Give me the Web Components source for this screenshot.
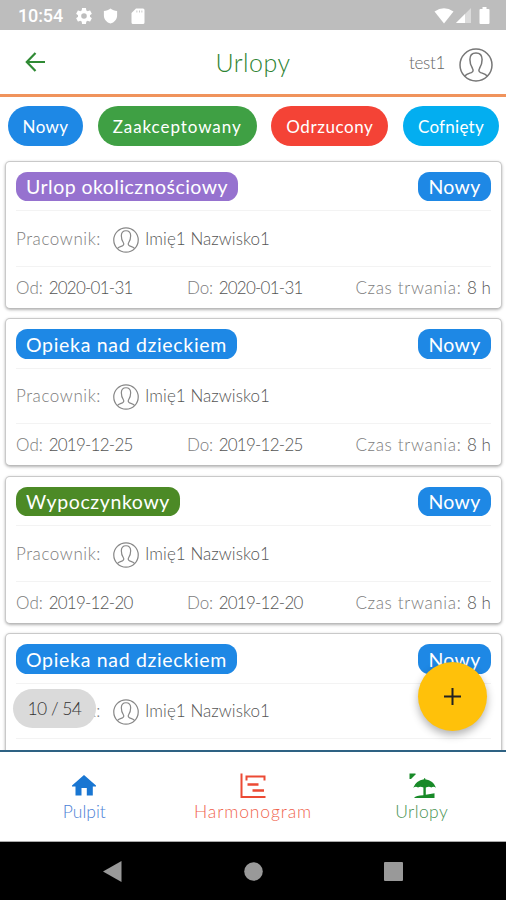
<!DOCTYPE html>
<html lang="pl">
<head>
<meta charset="utf-8">
<title>Urlopy</title>
<style>
    body {
        margin: 0;
        width: 506px;
        height: 900px;
        overflow: hidden;
        background: #fff;
        font-family: Lato, "Open Sans", sans-serif;
    }
</style>
</head>
<body>
<phone-screen>
    <status-bar slot="top" time="10:54"></status-bar>
    <app-header slot="top" user="test1">Urlopy</app-header>

    <filter-bar slot="top">
        <filter-chip color="#1e88e5" w="75" text="46">Nowy</filter-chip>
        <filter-chip color="#3fa044" w="159" text="129">Zaakceptowany</filter-chip>
        <filter-chip color="#f44336" w="117" text="87">Odrzucony</filter-chip>
        <filter-chip color="#03aef0" w="96" text="66">Cofnięty</filter-chip>
    </filter-bar>

    <leave-card color="#9672cf" w="222" from="2020-01-31" to="2020-01-31">Urlop okolicznościowy</leave-card>
    <leave-card color="#1e88e5" w="221" from="2019-12-25" to="2019-12-25">Opieka nad dzieckiem</leave-card>
    <leave-card color="#4c8a26" w="164" from="2019-12-20" to="2019-12-20">Wypoczynkowy</leave-card>
    <leave-card color="#1e88e5" w="221" from="2019-12-18" to="2019-12-18">Opieka nad dzieckiem</leave-card>

    <page-counter slot="over">10 / 54</page-counter>
    <add-button slot="over"></add-button>

    <tab-bar slot="bottom"></tab-bar>
    <system-bar slot="bottom"></system-bar>
</phone-screen>

<script>
const person = `
    <svg viewBox="0 0 34 34" fill="none" stroke="currentColor">
        <circle cx="17" cy="17" r="16"/>
        <path d="M5.5 28.2C7.5 26 10 25.4 12.3 24.6C14.3 23.8 14.6 22.2 13.4 20.3C11.8 18 10.9 15.2 10.9 11.6C10.9 7.3 13.2 4.9 17 4.9C20.8 4.9 23.1 7.3 23.1 11.6C23.1 15.2 22.2 18 20.6 20.3C19.4 22.2 19.7 23.8 21.7 24.6C24 25.4 26.5 26 28.5 28.2"/>
    </svg>`

//base for all the elements
class Base extends HTMLElement {
    constructor() {
        super()
        this.attachShadow({mode: 'open'})
    }

    connectedCallback() {
        this.shadowRoot.innerHTML = this.render()
    }

    attr(name) {
        return this.getAttribute(name) || ''
    }
}

//one line of text, spaced out to a given width
class FitText extends Base {
    connectedCallback() {
        super.connectedCallback()
        const span = this.shadowRoot.querySelector('span')
        const chars = this.textContent.trim().length
        const natural = span.getBoundingClientRect().width
        const wanted = Number(this.attr('w'))
        if (natural && wanted) {
            span.style.letterSpacing = (wanted - natural) / chars + 'px'
        }
    }

    render() {
        return `
            <style>
                :host { display: inline-block; white-space: nowrap; }
            </style>
            <span>${this.textContent.trim()}</span>`
    }
}

class PhoneScreen extends Base {
    render() {
        return `
            <style>
                :host { display: flex; flex-direction: column; width: 506px; height: 900px; }
                main {
                    flex: 1; min-height: 0; overflow: hidden;
                    display: flex; flex-direction: column; gap: 9.5px;
                    padding: 6.5px 4px 0 5px;
                    position: relative;
                }
            </style>
            <slot name="top"></slot>
            <main><slot></slot><slot name="over"></slot></main>
            <slot name="bottom"></slot>`
    }
}

class StatusBar extends Base {
    render() {
        return `
            <style>
                :host {
                    display: flex; align-items: center; box-sizing: border-box;
                    height: 30px; flex: none; padding: 1px 16px 0 18px;
                    background: #bdbdbd; color: #fff;
                    font: 500 18px Roboto, sans-serif;
                }
                svg { display: block; fill: #fff; }
                .gear { margin-left: 13px; width: 16px; height: 16px; }
                .shield { margin-left: 10px; width: 17px; }
                .card { margin-left: 10px; }
                .wifi { margin-left: auto; }
                .signal { margin-left: 2px; }
                .battery { margin-left: 8px; }
            </style>
            <fit-text w="45">${this.attr('time')}</fit-text>
            <svg class="gear" width="18" height="18" viewBox="2 2 20 20"><path d="M19.43 12.98c.04-.32.07-.64.07-.98s-.03-.66-.07-.98l2.11-1.65c.19-.15.24-.42.12-.64l-2-3.46c-.12-.22-.39-.3-.61-.22l-2.49 1c-.52-.4-1.08-.73-1.69-.98l-.38-2.65C14.46 2.18 14.25 2 14 2h-4c-.25 0-.46.18-.49.42l-.38 2.65c-.61.25-1.17.59-1.69.98l-2.49-1c-.23-.09-.49 0-.61.22l-2 3.46c-.13.22-.07.49.12.64l2.11 1.65c-.04.32-.07.65-.07.98s.03.66.07.98l-2.11 1.65c-.19.15-.24.42-.12.64l2 3.46c.12.22.39.3.61.22l2.49-1c.52.4 1.08.73 1.69.98l.38 2.65c.03.24.24.42.49.42h4c.25 0 .46-.18.49-.42l.38-2.65c.61-.25 1.17-.59 1.69-.98l2.49 1c.23.09.49 0 .61-.22l2-3.46c.12-.22.07-.49-.12-.64zM12 15.5a3.5 3.5 0 1 1 0-7 3.5 3.5 0 0 1 0 7z"/></svg>
            <svg class="shield" width="18" height="18" viewBox="0 0 18 18"><path d="M9 1C11 2.4 13.5 3.4 16 3.6V8.5C16 12.5 13 16 9 17C5 16 2 12.5 2 8.5V3.6C4.500 3.4 7 2.4 9 1z"/></svg>
            <svg class="card" width="17" height="18" viewBox="0 0 17 18"><path fill-rule="evenodd" d="M7 1.5H14a1.5 1.5 0 0 1 1.5 1.5V15.5A1.5 1.5 0 0 1 14 17H4a1.5 1.5 0 0 1-1.5-1.5V6zM7.5 3.5V5.5H8.3V3.5zM10 3.5V5.5H10.8V3.5zM12.5 3.5V5.5H13.3V3.5z"/></svg>
            <svg class="wifi" width="20" height="16" viewBox="0 0 20 16"><path d="M.5 3.5Q10-3 19.5 3.5L10 15.5z"/></svg>
            <svg class="signal" width="15" height="15" viewBox="0 0 15 15"><path opacity=".45" d="M15 0V15H0z"/><path d="M9 6V15H0z"/></svg>
            <svg class="battery" width="11" height="17" viewBox="0 0 11 17"><path d="M3.5 0H7.5V2H9.5Q10.5 2 10.5 3V16Q10.5 17 9.5 17H1.5Q.5 17 .5 16V3Q.5 2 1.5 2H3.5z"/></svg>`
    }
}

class AppHeader extends Base {
    render() {
        return `
            <style>
                :host {
                    display: grid; grid-template-columns: 1fr auto 1fr; align-items: center;
                    box-sizing: border-box; height: 67px; flex: none;
                    padding: 0 13px 0 25px;
                    border-bottom: 3px solid #f0935c;
                }
                .title { color: #2f8433; font-size: 25px; font-weight: 300; margin-left: -12px; }
                .user {
                    display: flex; align-items: center; justify-content: flex-end; gap: 14px;
                    color: #666; font-size: 17px; font-weight: 300;
                }
                person-icon { --size: 34px; color: #777; margin-top: 5px; }
                svg { display: block; }
            </style>
            <svg width="21" height="20" viewBox="0 0 21 20" fill="none" stroke="#2f8a34" stroke-width="2.2"><path d="M20 10H2.5M10.5 1L1.8 10L10.5 19"/></svg>
            <fit-text class="title" w="75">${this.textContent}</fit-text>
            <div class="user"><fit-text w="36">${this.attr('user')}</fit-text><person-icon></person-icon></div>`
    }
}

class PersonIcon extends Base {
    render() {
        return `
            <style>
                :host { display: block; width: var(--size); height: var(--size); }
                svg { display: block; width: 100%; height: 100%; stroke-width: var(--line, 1.5); }
            </style>
            ${person}`
    }
}

class FilterBar extends Base {
    render() {
        return `
            <style>
                :host {
                    display: flex; justify-content: space-between; box-sizing: border-box;
                    height: 57px; flex: none; padding: 9px 7px 0 8px;
                }
            </style>
            <slot></slot>`
    }
}

class FilterChip extends Base {
    render() {
        return `
            <style>
                :host {
                    display: flex; align-items: center; justify-content: center; box-sizing: border-box;
                    width: ${this.attr('w')}px; height: 39.5px; border-radius: 20px; padding-top: 1px;
                    background: ${this.attr('color')}; color: #fff; font-size: 17px;
                }
            </style>
            <fit-text w="${this.attr('text')}">${this.textContent}</fit-text>`
    }
}

class LeaveCard extends Base {
    render() {
        return `
            <style>
                :host {
                    display: block; box-sizing: border-box; flex: none; height: 148px;
                    padding: 10px 10px 0;
                    border: 1.5px solid #c9c9c9; border-bottom-color: #bbb; border-radius: 5px;
                    box-shadow: 0 1px 3px rgba(0, 0, 0, .3);
                    background: #fff; color: #555; font-size: 17px; font-weight: 300;
                }
                div { display: flex; align-items: center; box-sizing: border-box; }
                .head { justify-content: space-between; align-items: flex-start; height: 39.5px; border-bottom: 1px solid #f3f3f3; }
                .who { height: 55.5px; border-bottom: 1px solid #f3f3f3; }
                .dates { display: grid; grid-template-columns: 171px 1fr auto; height: 41px; }
                .dates fit-text + fit-text { margin-left: 1px; }
                .pill {
                    display: flex; justify-content: center; height: 29.5px; border-radius: 11.5px;
                    padding-top: 1px;
                    color: #fff; font-size: 19.5px; font-weight: 400;
                }
                .kind { width: ${this.attr('w')}px; background: ${this.attr('color')}; }
                .state { width: 73px; background: #1e88e5; }
                .dim { color: #7c7c7c; }
                person-icon { --size: 26px; --line: 1.6; color: #888; margin: 3px 6px 0 12px; }
            </style>
            <div class="head">
                <div class="pill kind"><fit-text w="${this.attr('w') - 20}">${this.textContent}</fit-text></div>
                <div class="pill state"><fit-text w="52">Nowy</fit-text></div>
            </div>
            <div class="who"><fit-text class="dim" w="85">Pracownik:</fit-text><person-icon></person-icon><fit-text w="125">Imię1 Nazwisko1</fit-text></div>
            <div class="dates">
                <span><fit-text class="dim" w="27">Od:</fit-text> <fit-text w="84">${this.attr('from')}</fit-text></span>
                <span><fit-text class="dim" w="26">Do:</fit-text> <fit-text w="84">${this.attr('to')}</fit-text></span>
                <span><fit-text class="dim" w="106">Czas trwania:</fit-text> <fit-text w="24">8 h</fit-text></span>
            </div>`
    }
}

//these two float over the list
class PageCounter extends Base {
    render() {
        return `
            <style>
                :host {
                    position: absolute; left: 13px; bottom: 22px;
                    display: flex; align-items: center; justify-content: center;
                    width: 83px; height: 39px; border-radius: 20px;
                    background: #dadada; color: #333; font-size: 17.5px; font-weight: 300;
                }
            </style>
            <fit-text w="54">${this.textContent}</fit-text>`
    }
}

class AddButton extends Base {
    render() {
        return `
            <style>
                :host {
                    position: absolute; right: 19px; bottom: 19.5px;
                    display: grid; place-items: center;
                    width: 69px; height: 69px; border-radius: 50%;
                    background: #ffc10a;
                    box-shadow: 0 4px 8px rgba(0, 0, 0, .3);
                }
            </style>
            <svg width="17" height="17" viewBox="0 0 17 17" stroke="#222" stroke-width="2"><path d="M8.5 0V17M0 8.5H17"/></svg>`
    }
}

class TabBar extends Base {
    render() {
        return `
            <style>
                :host {
                    display: grid; grid-template-columns: repeat(3, 1fr); box-sizing: border-box;
                    height: 92px; flex: none; padding-top: 20px;
                    border-top: 2.5px solid #2e6283; border-bottom: 1px solid #aaa;
                    font-size: 17.5px; font-weight: 300; background: #fff;
                }
                div { display: flex; flex-direction: column; align-items: center; }
                svg { display: block; height: 28px; width: 28px; margin-bottom: 1px; }
            </style>
            <div style="color: #4d7fd6">
                <svg viewBox="0 0 28 28" fill="#1976d2"><path d="M14 3L26 13.5V14.5H22.8V23.5H16.8V16H11.5V23.5H5.5V14.5H2V13.5z"/></svg>
                <fit-text w="43">Pulpit</fit-text>
            </div>
            <div style="color: #f0654f">
                <svg viewBox="0 0 28 28" fill="none" stroke="#ec4a34" stroke-width="2"><path d="M2.500 1.5V25H26.500M7.500 8.500V4.500H25.500V8.500"/><path stroke-width="2.600" d="M8.500 12.500H19.500M13.500 18.500H25"/></svg>
                <fit-text w="118">Harmonogram</fit-text>
            </div>
            <div style="color: #4b9455">
                <svg viewBox="0 0 28 28" fill="#188a28"><path d="M1.500 1.500H7.500V2.500L3 7H1.500z"/><path d="M16 6.200H17.200V7.300Q25.500 8.300 28 15.800Q25.500 14 23.300 15.600Q21.500 14 17.800 15.400V22.800L26.500 21.200V26H6Q8 23.500 15.400 23.300V15.400Q12 14 10 15.600Q8 14 5.200 15.800Q8 8.300 16 7.300z"/></svg>
                <fit-text w="53">Urlopy</fit-text>
            </div>`
    }
}

class SystemBar extends Base {
    render() {
        return `
            <style>
                :host { display: flex; align-items: center; justify-content: space-between; box-sizing: border-box; height: 58px; flex: none; padding: 0 103px; background: #000; }
                svg { display: block; fill: #999; }
            </style>
            <svg width="19" height="21"><path d="M0 10.5L18.5 0V21z"/></svg>
            <svg width="19" height="19"><circle cx="9.5" cy="9.5" r="9.3"/></svg>
            <svg width="19" height="19"><rect width="19" height="19" rx="1"/></svg>`
    }
}

customElements.define('fit-text', FitText)
customElements.define('person-icon', PersonIcon)
customElements.define('phone-screen', PhoneScreen)
customElements.define('status-bar', StatusBar)
customElements.define('app-header', AppHeader)
customElements.define('filter-bar', FilterBar)
customElements.define('filter-chip', FilterChip)
customElements.define('leave-card', LeaveCard)
customElements.define('page-counter', PageCounter)
customElements.define('add-button', AddButton)
customElements.define('tab-bar', TabBar)
customElements.define('system-bar', SystemBar)
</script>
</body>
</html>
